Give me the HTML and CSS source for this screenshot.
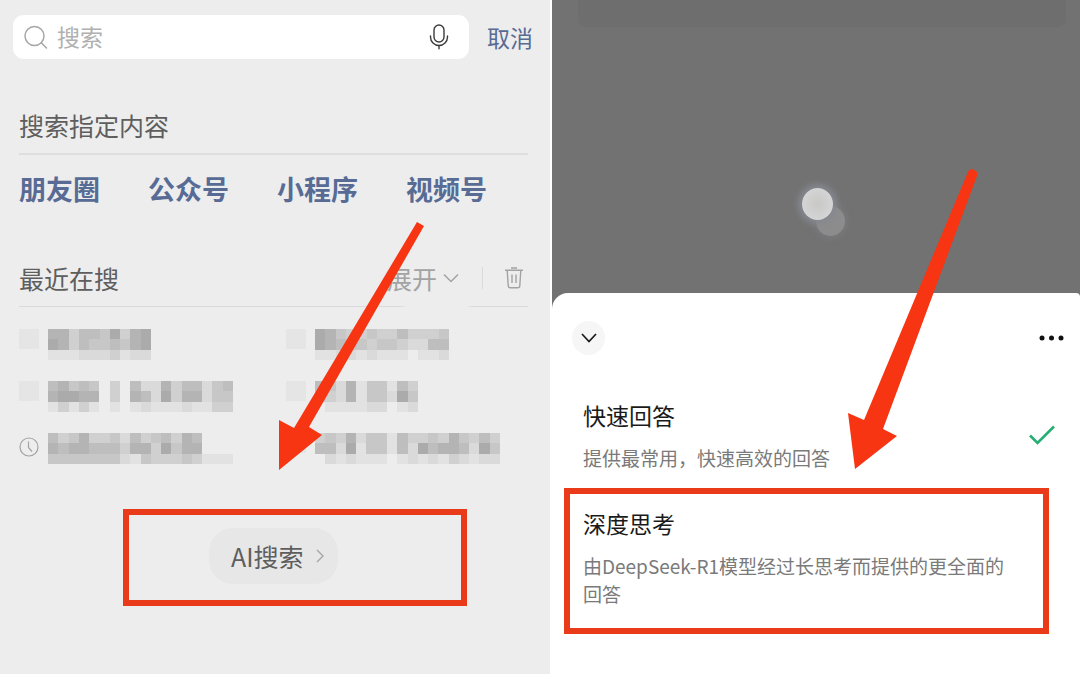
FILE: index.html
```html
<!DOCTYPE html>
<html lang="zh-CN">
<head>
    <meta charset="UTF-8">
    <meta name="viewport" content="width=device-width, initial-scale=1.0">
    <title>AI搜索</title>
    <link rel="stylesheet" href="styles.css">
</head>
<body>
    <div class="container">
        <main class="pane search-pane">
            <form class="search-header">
                <div class="search-box">
                    <svg class="search-icon" width="26" height="26" viewBox="0 0 26 26" fill="none" stroke="#A6A6A6" stroke-width="1.5" stroke-linecap="round">
                        <circle cx="11.5" cy="12" r="9.5"></circle>
                        <line x1="18.5" y1="19" x2="23.5" y2="24"></line>
                    </svg>
                    <input type="search" class="search-input" placeholder="搜索" aria-label="搜索">
                    <button type="button" class="icon-btn" aria-label="语音输入">
                        <svg width="20" height="26" viewBox="0 0 20 26" fill="none" stroke="#3C3C3C" stroke-width="1.4" stroke-linecap="round">
                            <rect x="5" y="1" width="10" height="17" rx="5"></rect>
                            <path d="M1.5 12v1a8.5 8.5 0 0 0 17 0v-1"></path>
                            <line x1="10" y1="21.5" x2="10" y2="24.8"></line>
                        </svg>
                    </button>
                </div>
                <button type="button" class="cancel-btn">取消</button>
            </form>

            <section class="section">
                <div class="section-head">
                    <h2>搜索指定内容</h2>
                </div>
                <nav class="channels">
                    <a href="#">朋友圈</a>
                    <a href="#">公众号</a>
                    <a href="#">小程序</a>
                    <a href="#">视频号</a>
                </nav>
            </section>

            <section class="section recent">
                <div class="section-head recent-head">
                    <h2>最近在搜</h2>
                    <button type="button" class="expand-btn">
                        展开
                        <svg width="16" height="10" viewBox="0 0 16 10" fill="none" stroke="currentColor" stroke-width="1.5">
                            <polyline points="1 1.5 8 8.5 15 1.5"></polyline>
                        </svg>
                    </button>
                    <button type="button" class="icon-btn trash-btn" aria-label="清空">
                        <svg width="20" height="22" viewBox="0 0 20 22" fill="none" stroke="#A3A3A3" stroke-width="1.4">
                            <path d="M1 3.2h18M7 1h6M3.2 3.2l1 15.6a2 2 0 0 0 2 2h7.6a2 2 0 0 0 2-2l1-15.6"></path>
                            <path d="M8 7.5v8.5M12 7.5v8.5"></path>
                        </svg>
                    </button>
                </div>
                <ul class="history">
                    <li><span class="blur-icon"></span><svg class="mosaic" data-rows="6635547367 7635445467 1112223122"></svg></li>
                    <li><span class="blur-icon"></span><svg class="mosaic" data-rows="7643343353334 7654434432255 1122121110112"></svg></li>
                    <li><span class="blur-icon"></span><svg class="mosaic" data-rows="564540305226355245 677660306527366244 131310101211121133"></svg></li>
                    <li><span class="blur-icon"></span><svg class="mosaic" data-rows="5426144153 4326144274 0111122012"></svg></li>
                    <li>
                        <svg class="clock-icon" width="20" height="20" viewBox="0 0 20 20" fill="none" stroke="#A3A3A3" stroke-width="1.2">
                            <circle cx="10" cy="10" r="9"></circle>
                            <path d="M9.5 4.5v6l3.5 4"></path>
                        </svg>
                        <svg class="mosaic" data-rows="534633425345365000 656655536637466000 444444421433343111"></svg>
                    </li>
                    <li><span class="blur-icon"></span><svg class="mosaic" data-rows="343624415334364353 552714415275665274 021211101212132122"></svg></li>
                </ul>
            </section>

            <div class="callout ai-callout">
                <button type="button" class="ai-btn">
                    AI搜索
                    <svg width="8" height="14" viewBox="0 0 8 14" fill="none" stroke="#A6A6A6" stroke-width="1.4">
                        <polyline points="1 1 7 7 1 13"></polyline>
                    </svg>
                </button>
            </div>

            <svg class="arrow arrow-left" width="146" height="248" viewBox="0 0 146 248" fill="#F73513">
                <polygon points="139,0 146,4 31,205 44,213 1,248 1,198 16,206"></polygon>
            </svg>
        </main>

        <aside class="pane mode-pane">
            <div class="backdrop">
                <div class="backdrop-card"></div>
                <span class="touch-trail"></span>
                <span class="touch-dot"></span>
            </div>
            <div class="sheet">
                <div class="sheet-head">
                    <button type="button" class="collapse-btn" aria-label="收起">
                        <svg width="16" height="10" viewBox="0 0 16 10" fill="none" stroke="#1A1A1A" stroke-width="1.7">
                            <polyline points="1 1 8 8.5 15 1"></polyline>
                        </svg>
                    </button>
                    <button type="button" class="icon-btn" aria-label="更多">
                        <svg width="26" height="6" viewBox="0 0 26 6" fill="#111">
                            <circle cx="3" cy="3" r="2.5"></circle>
                            <circle cx="12.5" cy="3" r="2.5"></circle>
                            <circle cx="22" cy="3" r="2.5"></circle>
                        </svg>
                    </button>
                </div>
                <label class="option">
                    <input type="radio" name="mode" checked>
                    <span class="option-text">
                        <span class="option-title">快速回答</span>
                        <span class="option-desc">提供最常用，快速高效的回答</span>
                    </span>
                    <svg class="check" width="26" height="20" viewBox="0 0 26 20" fill="none" stroke="#27AE73" stroke-width="2.6">
                        <polyline points="1 10.5 8.5 18 25 1.5"></polyline>
                    </svg>
                </label>
                <label class="option callout">
                    <input type="radio" name="mode">
                    <span class="option-text">
                        <span class="option-title">深度思考</span>
                        <span class="option-desc">由DeepSeek-R1模型经过长思考而提供的更全面的回答</span>
                    </span>
                </label>
            </div>

            <svg class="arrow arrow-right" width="134" height="302" viewBox="0 0 134 302" fill="#F73513">
                <path d="M122 4Q124-1 128 2Q133 4 131 8L37 261L51 268L9 301L2 245L18 252Z"></path>
            </svg>
        </aside>
    </div>

    <script src="script.js"></script>
</body>
</html>
```
FILE: styles.css
```css
:root {
    --panel-bg: #EDEDED;
    --link-color: #576B95;
    --text-color: #5E5E5E;
    --text-muted: #A3A3A3;
    --border-color: #DADADA;
    --callout-color: #E93A1A;
}

* {
    box-sizing: border-box;
}

body {
    margin: 0;
    font-family: "Noto Sans CJK SC", "Noto Sans", sans-serif;
    color: var(--text-color);
    background: #FFFFFF;
}

button {
    border: none;
    padding: 0;
    background: none;
    font: inherit;
    color: inherit;
    cursor: pointer;
}

svg {
    display: block;
    flex: none;
}

.container {
    display: grid;
    grid-template-columns: 550fr 528fr;
    gap: 2px;
    min-height: 100vh;
}

.pane {
    position: relative;
    min-width: 0;
    overflow: hidden;
}

/* Search page */
.search-pane {
    background: var(--panel-bg);
}

.search-header {
    display: flex;
    align-items: center;
    gap: 18px;
    padding: 15px 17px 0 13px;
}

.search-box {
    flex: 1;
    display: flex;
    align-items: center;
    min-width: 0;
    height: 44px;
    padding: 0 20px 0 10px;
    border-radius: 11px;
    background: #FFFFFF;
}

.search-input {
    flex: 1;
    min-width: 0;
    margin-left: 8px;
    padding: 0 0 3px;
    border: none;
    outline: none;
    background: none;
    font: inherit;
    font-size: 23px;
}

.search-input::placeholder {
    color: #B0B0B0;
}

.cancel-btn {
    font-size: 23px;
    line-height: 42px;
    color: var(--link-color);
}

.section {
    margin: 41px 22px 0 19px;
}

.section-head {
    display: flex;
    align-items: center;
    height: 55px;
    padding-bottom: 3px;
    border-bottom: 2px solid #DEDEDE;
}

h2 {
    margin: 0;
    font-size: 25px;
    font-weight: 400;
    line-height: 36px;
}

.channels {
    display: flex;
    gap: 48px;
    margin-top: 14px;
}

.channels a {
    font-size: 27px;
    font-weight: 700;
    line-height: 40px;
    color: var(--link-color);
    text-decoration: none;
}

.recent {
    margin-top: 43px;
}

/* the rule fades out under the expand button */
.recent-head {
    border-bottom: none;
    background: linear-gradient(90deg, var(--border-color) 75%, transparent 76%, transparent 88%, var(--border-color) 89%) bottom / 100% 1px no-repeat;
}

.expand-btn {
    display: flex;
    align-items: center;
    gap: 6px;
    margin-left: auto;
    padding-right: 23px;
    font-size: 25px;
    line-height: 36px;
    color: var(--text-muted);
}

.trash-btn {
    padding: 0 4px 0 21px;
    border-left: 1px solid var(--border-color);
}

.history {
    display: grid;
    grid-template-columns: 11fr 10fr;
    row-gap: 21px;
    margin: 22px 0 0;
    padding: 0;
    list-style: none;
}

.history li {
    display: flex;
    gap: 9px;
    height: 31px;
}

.blur-icon {
    width: 20px;
    height: 20px;
    background: #E5E5E5;
}

.clock-icon {
    margin-top: 4px;
}

.mosaic {
    height: 31px;
}

.callout {
    border: 6px solid var(--callout-color);
}

.ai-callout {
    margin: 45px 83px 0 123px;
    padding: 13px 80px 16px;
}

.ai-btn {
    display: flex;
    align-items: center;
    gap: 12px;
    height: 56px;
    padding: 0 14px 0 22px;
    border-radius: 24px;
    background: #E7E7E7;
    font-size: 25px;
}

.arrow {
    position: absolute;
    pointer-events: none;
}

.arrow-left {
    top: 222px;
    left: 278px;
}

/* Answer mode sheet */
.mode-pane {
    display: flex;
    flex-direction: column;
    background: #727272;
}

.backdrop {
    position: relative;
    height: 293px;
}

.backdrop-card {
    height: 27px;
    margin: 0 14px 0 26px;
    border-radius: 0 0 8px 8px;
    background: #6E6E6E;
}

.touch-dot,
.touch-trail {
    position: absolute;
    border-radius: 50%;
}

.touch-dot {
    top: 188px;
    left: 250px;
    width: 31px;
    height: 32px;
    background: radial-gradient(#C8C8C6, #DADADC);
    box-shadow: 0 0 6px 4px #858891;
}

.touch-trail {
    top: 206px;
    left: 264px;
    width: 29px;
    height: 30px;
    background: #8C8C8C;
    box-shadow: 0 0 6px 2px #7A7B7E;
}

.sheet {
    flex: 1;
    padding: 28px 0 40px;
    border-radius: 16px 4px 0 0;
    background: #FFFFFF;
}

.sheet-head {
    display: flex;
    align-items: center;
    justify-content: space-between;
    padding: 0 15px 0 20px;
}

.collapse-btn {
    display: grid;
    place-items: center;
    width: 33px;
    height: 34px;
    border-radius: 50%;
    background: #F6F6F6;
}

.option {
    display: flex;
    align-items: center;
    margin: 0 31px 0 12px;
    padding: 12px 34px 20px 13px;
    cursor: pointer;
}

.option:not(.callout) {
    margin: 32px 25px 0 12px;
    padding: 11px 0 16px 19px;
}

.option input {
    position: absolute;
    opacity: 0;
}

.option-text {
    flex: 1;
}

.option-title,
.option-desc {
    display: block;
}

.option-title {
    margin-bottom: 12px;
    font-size: 23px;
    line-height: 34px;
    color: #1A1A1A;
}

.option-desc {
    font-size: 19px;
    line-height: 28px;
    color: #7A7A7A;
}

.arrow-right {
    top: 168px;
    left: 294px;
}
```
FILE: script.js
```javascript
// Each digit is one mosaic cell, 0 is empty and higher is darker
const shades = ['none', '#E2E2E2', '#DADADA', '#D0D0D0', '#C7C7C7', '#BEBEBE', '#B4B4B4', '#ABABAB'];
const cell = 10.3;

document.querySelectorAll('.mosaic').forEach((svg) => {
    const rows = svg.dataset.rows.split(' ');
    svg.setAttribute('viewBox', `0 0 ${rows[0].length} 3`);
    svg.setAttribute('width', Math.round(rows[0].length * cell));
    svg.setAttribute('preserveAspectRatio', 'none');
    svg.setAttribute('shape-rendering', 'crispEdges');

    rows.forEach((row, y) => {
        [...row].forEach((level, x) => {
            const rect = document.createElementNS('http://www.w3.org/2000/svg', 'rect');
            rect.setAttribute('x', x);
            rect.setAttribute('y', y);
            rect.setAttribute('width', 1);
            rect.setAttribute('height', 1);
            rect.setAttribute('fill', shades[level]);
            svg.appendChild(rect);
        });
    });
});
```
